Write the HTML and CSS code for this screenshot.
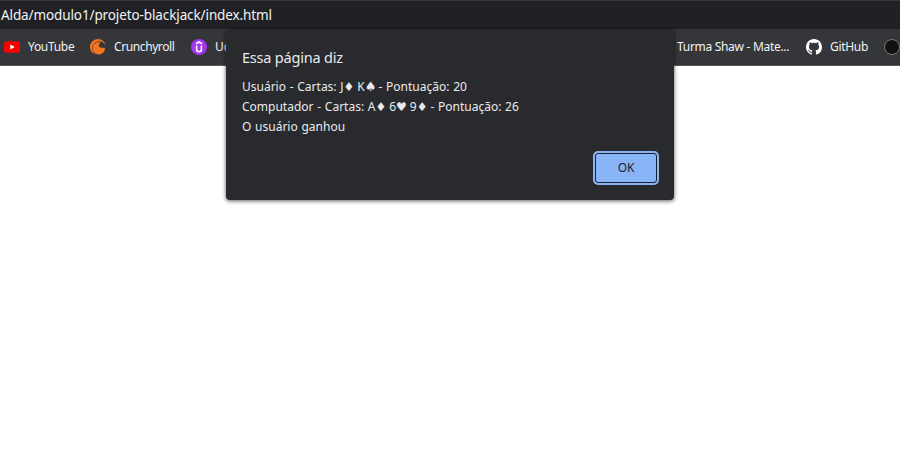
FILE: index.html
```html
<!DOCTYPE html>
<html lang="pt-BR">
<head>
<meta charset="utf-8">
<title>Blackjack</title>
<link rel="stylesheet" href="styles.css">
</head>
<body>
<header class="address"><span class="url">Alda/modulo1/projeto-blackjack/index.html</span></header>
<nav class="bookmarks">
  <div class="group">
    <a class="bookmark"><svg class="icon" viewBox="0 0 16 16"><rect y="2.3" width="16" height="11.4" rx="2.8" fill="#f00"/><path d="M6.3 5.5v5l4.4-2.5z" fill="#fff"/></svg><span class="youtube">YouTube</span></a>
    <a class="bookmark"><svg class="icon" viewBox="0 0 16 16"><path d="M15.9 7.1A8 8 0 1 0 7.2 16 7 7 0 1 1 15.9 7.1z" fill="#f47521"/><path d="M12.9 8.5A2.7 2.7 0 1 1 11.1 3.5 6.2 6.2 0 1 0 15 9.1a2.8 2.8 0 0 1-2.1-.6z" fill="#f47521"/></svg><span class="crunchy">Crunchyroll</span></a>
    <a class="bookmark"><svg class="icon" viewBox="0 0 16 16"><circle cx="8" cy="8" r="8" fill="#a435f0"/><path d="M5 4.7 8 3l3 1.7M5.6 6.5v3.8a2.4 2.4 0 0 0 4.8 0V6.5" fill="none" stroke="#fff" stroke-width="1.6"/></svg><span class="clipped">Ud</span></a>
  </div>
  <div class="group group-end">
    <a class="bookmark"><span class="turma">Turma Shaw - Mate...</span></a>
    <a class="bookmark"><svg class="icon" viewBox="0 0 16 16"><path fill="#fff" d="M8 0C3.58 0 0 3.58 0 8c0 3.54 2.29 6.53 5.47 7.59.4.07.55-.17.55-.38 0-.19-.01-.82-.01-1.49-2.01.37-2.53-.49-2.69-.94-.09-.23-.48-.94-.82-1.13-.28-.15-.68-.52-.01-.53.63-.01 1.08.58 1.23.82.72 1.21 1.87.87 2.33.66.07-.52.28-.87.51-1.07-1.78-.2-3.64-.89-3.64-3.95 0-.87.31-1.59.82-2.15-.08-.2-.36-1.02.08-2.12 0 0 .67-.21 2.2.82A7.6 7.6 0 0 1 8 3.86c.68 0 1.36.09 2 .27 1.53-1.04 2.2-.82 2.2-.82.44 1.1.16 1.92.08 2.12.51.56.82 1.27.82 2.15 0 3.07-1.87 3.75-3.65 3.95.29.25.54.73.54 1.48 0 1.07-.01 1.93-.01 2.2 0 .21.15.46.55.38A8.01 8.01 0 0 0 16 8c0-4.42-3.58-8-8-8z"/></svg><span class="github">GitHub</span></a>
    <a class="bookmark"><svg class="icon" viewBox="0 0 16 16"><circle cx="8" cy="8" r="7.5" fill="#111" stroke="#777"/></svg></a>
  </div>
</nav>
<section class="dialog" role="dialog">
  <h1 class="title"><span>Essa página diz</span></h1>
  <p class="line">Usuário - Cartas: J<span class="suit">♦</span> K<span class="suit spade">♠</span> - Pontuação: 20</p>
  <p class="line">Computador - Cartas: A<span class="suit">♦</span> 6<span class="suit">♥</span> 9<span class="suit">♦</span> - Pontuação: 26</p>
  <p class="line">O usuário ganhou</p>
  <div class="actions"><button class="ok">OK</button></div>
</section>
</body>
</html>
```
FILE: styles.css
```css
* { box-sizing: border-box; }
body {
  margin: 0;
  height: 450px;
  overflow: hidden;
  background: #fff;
  color: #f1f3f4;
  font: 12px/20px "Noto Sans", "Open Sans", sans-serif;
}
.address {
  height: 29px;
  padding-left: 1px;
  border-top: 1px solid #35363a;
  background: #202124;
  font-size: 13.5px;
  line-height: 28px;
  white-space: nowrap;
}
.url { letter-spacing: -0.11px; }
.bookmarks {
  display: flex;
  justify-content: space-between;
  height: 37px;
  border-bottom: 1px solid #56575b;
  background: #35363a;
  overflow: hidden;
}
.group {
  display: flex;
  align-items: center;
  gap: 16px;
  padding-left: 4px;
}
.group-end { width: 223px; padding-left: 0; flex: none; }
.bookmark {
  display: flex;
  align-items: center;
  flex: none;
  gap: 8px;
  white-space: nowrap;
}
.icon { display: block; width: 16px; height: 16px; flex: none; }
.youtube { width: 46px; letter-spacing: -0.3px; }
.crunchy { width: 61px; letter-spacing: -0.4px; }
.clipped { width: 11px; overflow: hidden; }
.turma { width: 113px; letter-spacing: -0.3px; }
.github { width: 38px; letter-spacing: -0.3px; }
.dialog {
  position: absolute;
  left: 226px;
  top: 29px;
  width: 448px;
  height: 171px;
  padding: 18px 17px 16px 16px;
  border-radius: 4px;
  background: #292a2d;
  box-shadow: 0 1px 4px rgba(0, 0, 0, 0.65);
  color: #e8eaed;
}
.title {
  margin: 0 0 10px;
  font-size: 14.5px;
  font-weight: 400;
  line-height: 20px;
  letter-spacing: -0.2px;
}
.line {
  height: 20px;
  margin: 0;
  white-space: nowrap;
  letter-spacing: 0;
  word-spacing: 0.6px;
}
.suit {
  display: inline-block;
  width: 10px;
  font: 12px/12px "DejaVu Sans", sans-serif;
  letter-spacing: 0;
  text-align: center;
}
.spade { font-size: 13px; }
.actions { display: flex; justify-content: flex-end; margin-top: 16px; }
.ok {
  width: 62px;
  height: 30px;
  padding: 0;
  border: 1px solid #202124;
  border-radius: 3px;
  background: #8ab4f8;
  box-shadow: 0 0 0 2px #8ab4f8;
  color: #202124;
  font: 12px/28px "Noto Sans", sans-serif;
  letter-spacing: -0.2px;
}
```
